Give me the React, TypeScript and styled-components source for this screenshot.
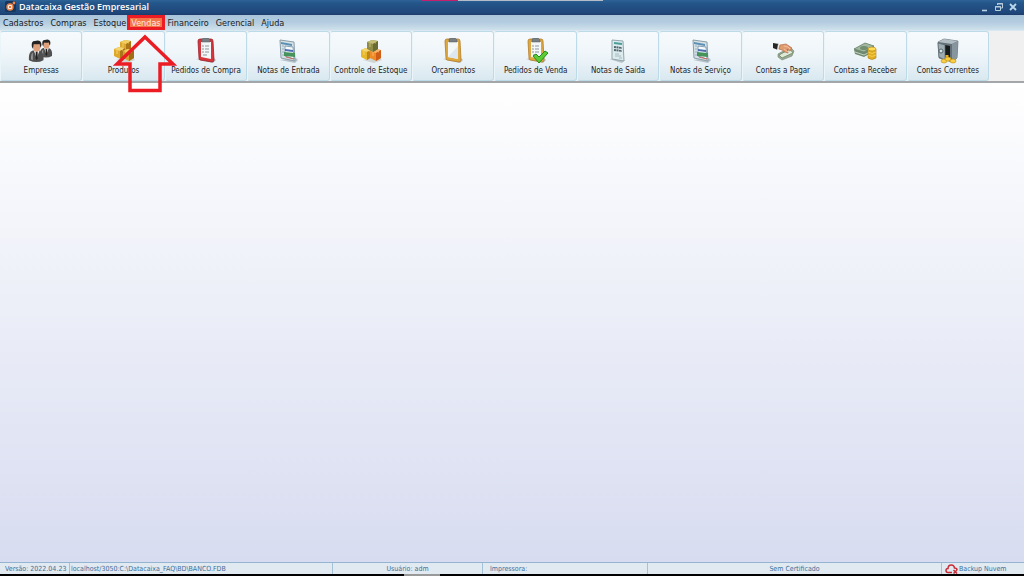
import React from "react";
import styled, { createGlobalStyle } from "styled-components";

const GlobalStyle = createGlobalStyle`
  * { box-sizing: border-box; }
  html, body, #root { height: 100%; margin: 0; }
  body, button {
    font-family: Tahoma, "DejaVu Sans Condensed", "DejaVu Sans", sans-serif;
    font-size: 8px;
    line-height: 10px;
  }
`;

const Window = styled.div`
  display: flex;
  flex-direction: column;
  min-height: 100vh;
  overflow: hidden;
`;

const TitleBar = styled.header`
  position: relative;
  display: flex;
  align-items: center;
  height: 15px;
  padding: 0 6px 2px 5px;
  color: #fff;
  background: linear-gradient(#2d6496 0, #24568a 3px, #1f467a 13px, #1b3c6b 15px);
`;

const CaptureStrip = styled.div`
  position: absolute;
  top: 0;
  left: 41.2%;
  width: 17.7%;
  height: 1px;
  background: linear-gradient(90deg, #c4206e 20%, #b4bcc9 20%);
`;

const Title = styled.h1`
  flex: 1;
  margin: 0 0 0 3px;
  font-family: Tahoma, "Open Sans", sans-serif;
  font-size: 9px;
  line-height: 10px;
  font-weight: 600;
`;

const WindowControls = styled.div`
  display: flex;
  gap: 4px;
`;

const ControlButton = styled.button`
  display: flex;
  padding: 0;
  border: 0;
  background: none;
`;

const MenuBar = styled.nav`
  display: flex;
  height: 15px;
  background: linear-gradient(#a9c4da, #b4cde0 50%, #cfe1ec);
`;

const MenuItem = styled.button<{ $marked?: boolean }>`
  position: relative;
  padding: 0 ${(p) => (p.$marked ? "1px" : "3px")};
  margin-left: ${(p) => (p.$marked ? "-3px" : "0")};
  margin-right: ${(p) => (p.$marked ? "0" : "1px")};
  border: ${(p) => (p.$marked ? "3px solid #ec1c24" : "0")};
  color: ${(p) => (p.$marked ? "#ffe9dc" : "#151b26")};
  background: ${(p) => (p.$marked ? "#f4754a" : "none")};
  font-size: 9px;
  white-space: nowrap;
`;

const MarkerArrow = styled.svg`
  position: absolute;
  z-index: 2;
  top: 15px;
  left: 50%;
  margin-left: -33px;
  pointer-events: none;
`;

const Toolbar = styled.div`
  display: grid;
  grid-template-columns: repeat(12, minmax(0, 1fr)) 35px;
  height: 53px;
  border-top: 1px solid #d9e8f0;
  border-bottom: 2px solid #a3a7aa;
  background: #f0f0f0;
`;

const ToolButton = styled.button`
  display: flex;
  flex-direction: column;
  align-items: center;
  gap: 2px;
  padding: 6px 0 0;
  border: 1px solid #bcdae8;
  border-left-color: #eaf5fa;
  border-radius: 3px;
  color: #1c1c24;
  background: linear-gradient(#f7fafc, #eef5f9 50%, #d9e8f0);
  white-space: nowrap;
`;

const Workspace = styled.main`
  flex: 1;
  background: linear-gradient(#ffffff, #d7dcf0);
`;

const StatusBar = styled.footer`
  display: grid;
  grid-template-columns: 70fr 263fr 150fr 165fr 294fr 82fr;
  height: 12px;
  border-top: 1px solid #94b4d2;
  background: #e1e9f1;
  font-size: 7px;
`;

const StatusCell = styled.div<{ $align?: string; $inset?: number }>`
  display: flex;
  align-items: center;
  gap: 1px;
  justify-content: ${(p) => p.$align ?? "flex-start"};
  padding-left: ${(p) => p.$inset ?? 0}px;
  border-right: 1px solid #a4c1d6;
  color: #416f98;
  white-space: nowrap;
  min-width: 0;

  &:last-child { border-right: 0; }
`;

const TaskEdge = styled.div`
  height: 2px;
  background: #000;
`;

const TaskMark = styled.div`
  width: 3.5%;
  height: 2px;
  margin-left: 39.5%;
  background: #999;
`;

const Icon = ({ children }: { children: React.ReactNode }) => (
  <svg width="26" height="26" viewBox="0 0 26 26" aria-hidden="true">{children}</svg>
);

const Person = ({ x, y, s }: { x: number; y: number; s: number }) => (
  <g transform={`translate(${x} ${y}) scale(${s})`}>
    <path d="M0 20 Q-1 12 4 10 L11 10 Q16 12 15 20 Q8 24 0 20Z" fill="#505050" />
    <path d="M2 19 Q2 13 4 12 L4 20Z" fill="#999" />
    <path d="M5 10 L8 18 L11 10Z" fill="#f4f4f4" />
    <path d="M7 11 L9 11 L9 18 L8 20 L7 18Z" fill="#222" />
    <ellipse cx="8" cy="6" rx="4" ry="5" fill="#dfa07c" />
    <path d="M3 6 Q2 0 6 0 Q12 -2 13 3 Q13 6 12 7 L11 3 Q7 4 5 3 L4 8Z" fill="#242424" />
  </g>
);

const PeopleIcon = () => (
  <Icon>
    <Person x={12} y={2} s={0.8} />
    <Person x={1} y={3} s={0.96} />
  </Icon>
);

const Cube = ({ x, y, top, left, right }: { x: number; y: number; top: string; left: string; right: string }) => (
  <g transform={`translate(${x} ${y})`}>
    <path d="M0 2 L5 0 L11 1 L11 9 L6 12 L0 9Z" fill={left} />
    <path d="M0 2 L5 0 L11 1 L6 4Z" fill={top} />
    <path d="M6 4 L11 1 L11 9 L6 12Z" fill={right} />
    <path d="M3 1 L9 3 M3 3 L3 7" stroke={top} strokeWidth="1" />
  </g>
);

const BoxesIcon = ({ mixed = false }: { mixed?: boolean }) => (
  <Icon>
    <path d="M5 22 L16 25 L24 22 L20 18Z" fill="#b5b6af" opacity=".5" />
    {mixed ? (
      <>
        <Cube x={3} y={10} top="#f5d571" left="#e7b629" right="#bd861d" />
        <Cube x={12} y={11} top="#f9b46b" left="#ee8d28" right="#cf5d17" />
        <Cube x={9} y={2} top="#c3bd78" left="#8f8c48" right="#696b32" />
      </>
    ) : (
      <>
        <Cube x={9} y={2} top="#f1cf62" left="#dba82d" right="#ac7518" />
        <Cube x={3} y={9} top="#f5d571" left="#dfaa2c" right="#ad761b" />
        <Cube x={12} y={11} top="#f1cf62" left="#d5a02b" right="#a26b16" />
      </>
    )}
  </Icon>
);

const ClipboardIcon = ({ kind }: { kind: "red" | "blank" | "done" }) => (
  <Icon>
    <path d="M3 21 L20 25 L23 22 L20 19Z" fill="#8d8a83" opacity=".5" />
    <path
      d="M5 3 Q5 1 7 1 L18 1 Q20 1 20 3 L21 22 Q21 24 19 24 L7 22 Q6 22 6 20Z"
      fill={kind === "red" ? "#d7353b" : "#dda83f"}
      stroke={kind === "red" ? "#9c2229" : "#b47b28"}
      strokeWidth=".8"
    />
    <path d="M8 4 L18 4 L18 21 L8 19Z" fill="#f4f7f8" />
    {kind === "blank" && <path d="M8 19 L18 8 L18 21Z" fill="#dce7ef" />}
    <path d="M9 1 L11 0 L15 0 L17 2 L17 4 L9 4Z" fill="#777e84" stroke="#555d61" strokeWidth=".5" />
    {kind !== "blank" && (
      <path d="M9 8 H11 M12 8 H16 M9 11 H11 M12 11 H16 M9 14 H11 M12 14 H16 M10 17 H14" stroke="#8d959b" />
    )}
    {kind === "done" && <path d="M10 18 L13 16 L16 19 L22 13 L25 15 L16 25Z" fill="#5ccb35" stroke="#238c18" />}
  </Icon>
);

const NoteIcon = () => (
  <Icon>
    <path d="M5 22 L20 25 L23 22 L21 20Z" fill="#819099" opacity=".5" />
    <path d="M5 2 L19 4 L20 23 L6 20Z" fill="#d5e1e7" stroke="#8a9ca6" />
    <path d="M6 4 L17 6 L17 8 L6 6Z" fill="#5b8fb4" />
    <path d="M7 8 H9 M7 11 H9 M7 14 H9 M7 17 H9" stroke="#95b0bf" />
    <path d="M10 8 L18 9 L19 21 L10 18Z" fill="#f6fbfa" stroke="#6d8aa3" strokeWidth=".8" />
    <path d="M10 11 L18 12 L18 14 L10 13Z" fill="#4c6db0" />
    <path d="M9 14 L20 15 L20 19 L9 18Z" fill="#46935b" />
    <path d="M11 19 L19 21" stroke="#cb6b5d" />
  </Icon>
);

const InvoiceIcon = () => (
  <Icon>
    <path d="M4 21 L17 25 L20 22Z" fill="#849099" opacity=".5" />
    <path d="M7 2 L18 3 L19 23 L7 21Z" fill="#dcebed" stroke="#91a5ad" />
    <path d="M9 5 L17 6" stroke="#4a9d98" strokeWidth="2" />
    <path d="M9 9 L17 10 M9 12 L17 13" stroke="#52666e" strokeWidth="2" strokeDasharray="2 .5" />
    <path d="M10 16 H14 M10 18 H16 M14 20 H17" stroke="#a5bac1" />
  </Icon>
);

const PayIcon = () => (
  <Icon>
    <path d="M8 16 L20 9 L24 13 L22 18 L12 22 L8 19Z" fill="#9aaa94" stroke="#738371" strokeWidth=".6" />
    <path d="M9 17 L20 11 L23 15 L12 20Z" fill="#e0e9d7" stroke="#7c9476" />
    <path d="M3 5 L9 6 L8 12 L3 10Z" fill="#272727" />
    <path d="M8 6 L11 7 L10 12 L7 12Z" fill="#eeeae0" />
    <path d="M10 7 L16 6 L22 10 L20 13 L17 11 L18 15 L15 14 L12 12 L9 11Z" fill="#df9c70" stroke="#b56d48" strokeWidth=".7" />
    <path d="M14 8 L18 9 L20 11 M14 11 L18 14" stroke="#f5bd98" fill="none" />
  </Icon>
);

const Coins = ({ x, y }: { x: number; y: number }) => (
  <g transform={`translate(${x} ${y})`} stroke="#b28017" strokeWidth=".6">
    <path d="M0 2 V11 Q4 14 8 11 V2Z" fill="#e2ae20" />
    <path d="M0 5 Q4 8 8 5 M0 8 Q4 11 8 8" fill="none" stroke="#ffe26c" />
    <ellipse cx="4" cy="2" rx="4" ry="2" fill="#ffdc50" />
  </g>
);

const ReceiveIcon = () => (
  <Icon>
    <path d="M2 11 L13 5 L22 8 L21 14 L12 19 L3 16Z" fill="#6e8a70" />
    <path d="M2 11 L13 5 L22 8 L12 14Z" fill="#a2b79d" stroke="#67816b" strokeWidth=".7" />
    <path d="M3 14 L12 17 L18 14" stroke="#c6d1bd" fill="none" />
    <ellipse cx="12" cy="10" rx="4" ry="2" fill="#718e70" />
    <Coins x={16} y={9} />
  </Icon>
);

const SafeIcon = () => (
  <Icon>
    <path d="M3 4 L9 1 L23 3 L22 20 L17 24 L4 20Z" fill="#647078" stroke="#515d65" strokeWidth=".6" />
    <path d="M3 4 L9 1 L23 3 L17 6Z" fill="#b1bdc3" />
    <path d="M17 6 L23 3 L22 20 L17 24Z" fill="#87959e" />
    <path d="M10 7 L15 8 V21 L10 20Z" fill="#171a1b" />
    <path d="M3 5 L10 7 L10 22 L4 19Z" fill="#9eabb1" stroke="#596970" strokeWidth=".7" />
    <circle cx="6" cy="13" r="2" fill="#dbe5e8" stroke="#52646c" />
    <path d="M12 17 V21" stroke="#e2b126" strokeWidth="3" />
    <g fill="#f7cf42" stroke="#bd8818" strokeWidth=".6">
      <ellipse cx="9" cy="23" rx="3" ry="2" />
      <ellipse cx="13" cy="21" rx="3" ry="2" />
      <ellipse cx="18" cy="23" rx="3" ry="2" />
    </g>
  </Icon>
);

const menus = ["Cadastros", "Compras", "Estoque", "Vendas", "Financeiro", "Gerencial", "Ajuda"];

const tools = [
  { label: "Empresas", icon: <PeopleIcon /> },
  { label: "Produtos", icon: <BoxesIcon /> },
  { label: "Pedidos de Compra", icon: <ClipboardIcon kind="red" /> },
  { label: "Notas de Entrada", icon: <NoteIcon /> },
  { label: "Controle de Estoque", icon: <BoxesIcon mixed /> },
  { label: "Orçamentos", icon: <ClipboardIcon kind="blank" /> },
  { label: "Pedidos de Venda", icon: <ClipboardIcon kind="done" /> },
  { label: "Notas de Saída", icon: <InvoiceIcon /> },
  { label: "Notas de Serviço", icon: <NoteIcon /> },
  { label: "Contas a Pagar", icon: <PayIcon /> },
  { label: "Contas a Receber", icon: <ReceiveIcon /> },
  { label: "Contas Correntes", icon: <SafeIcon /> },
];

export default function App() {
  return (
    <Window>
      <GlobalStyle />
      <TitleBar>
        <CaptureStrip />
        <svg width="11" height="13" viewBox="0 0 11 13" aria-hidden="true">
          <rect x="0" y="1" width="11" height="11" rx="2" fill="#17365b" />
          <circle cx="5" cy="7" r="3" fill="#fff0df" stroke="#ed8248" strokeWidth="1.4" />
          <path d="M4 6 L6 8 M6 6 L4 8" stroke="#df7440" />
          <circle cx="9" cy="3" r="1.4" fill="#f58b46" />
        </svg>
        <Title>Datacaixa Gestão Empresarial</Title>
        <WindowControls>
          <ControlButton aria-label="Minimizar">
            <svg width="10" height="10"><path d="M2 8.500 H7" stroke="#b9d3e6" strokeWidth="1.600" /></svg>
          </ControlButton>
          <ControlButton aria-label="Restaurar">
            <svg width="10" height="10" fill="none" stroke="#b9cedd">
              <path d="M3.500 3 V1.500 H8.500 V6 H7 M1.500 4.500 H6.500 V8.500 H1.500Z" />
              <path d="M3 2 H9 M1 5 H7" />
            </svg>
          </ControlButton>
          <ControlButton aria-label="Fechar">
            <svg width="10" height="10"><path d="M2 2 L8 8 M8 2 L2 8" stroke="#b9d8eb" strokeWidth="1.800" /></svg>
          </ControlButton>
        </WindowControls>
      </TitleBar>
      <MenuBar>
        {menus.map((name) => (
          <MenuItem key={name} $marked={name === "Vendas"}>
            {name}
            {name === "Vendas" && (
              <MarkerArrow width="64" height="60" viewBox="0 0 64 60" aria-hidden="true">
                <path d="M32 4 L60 31 H47 V57.500 H17 V31 H4 Z" fill="none" stroke="#ec1c24" strokeWidth="3.500" />
              </MarkerArrow>
            )}
          </MenuItem>
        ))}
      </MenuBar>
      <Toolbar>
        {tools.map((tool) => (
          <ToolButton key={tool.label}>
            {tool.icon}
            {tool.label}
          </ToolButton>
        ))}
      </Toolbar>
      <Workspace />
      <StatusBar>
        <StatusCell $inset={5}>Versão: 2022.04.23</StatusCell>
        <StatusCell $inset={1}>localhost/3050:C:\Datacaixa_FAQ\BD\BANCO.FDB</StatusCell>
        <StatusCell $align="center">Usuário: adm</StatusCell>
        <StatusCell $inset={7}>Impressora:</StatusCell>
        <StatusCell $align="center">Sem Certificado</StatusCell>
        <StatusCell $inset={3}>
          <svg width="13" height="10" viewBox="0 0 13 10" fill="none" stroke="#c82e37" strokeWidth="1.500" aria-hidden="true">
            <path d="M7 8.500 H3 Q1 8.500 1 6.500 Q1 4.500 3 4.500 Q3 1 6.500 1 Q9 1 9.500 4 Q12 4 12 6" />
            <path d="M8.500 6 L12 9.500 M12 6 L8.500 9.500" />
          </svg>
          Backup Nuvem
        </StatusCell>
      </StatusBar>
      <TaskEdge><TaskMark /></TaskEdge>
    </Window>
  );
}
